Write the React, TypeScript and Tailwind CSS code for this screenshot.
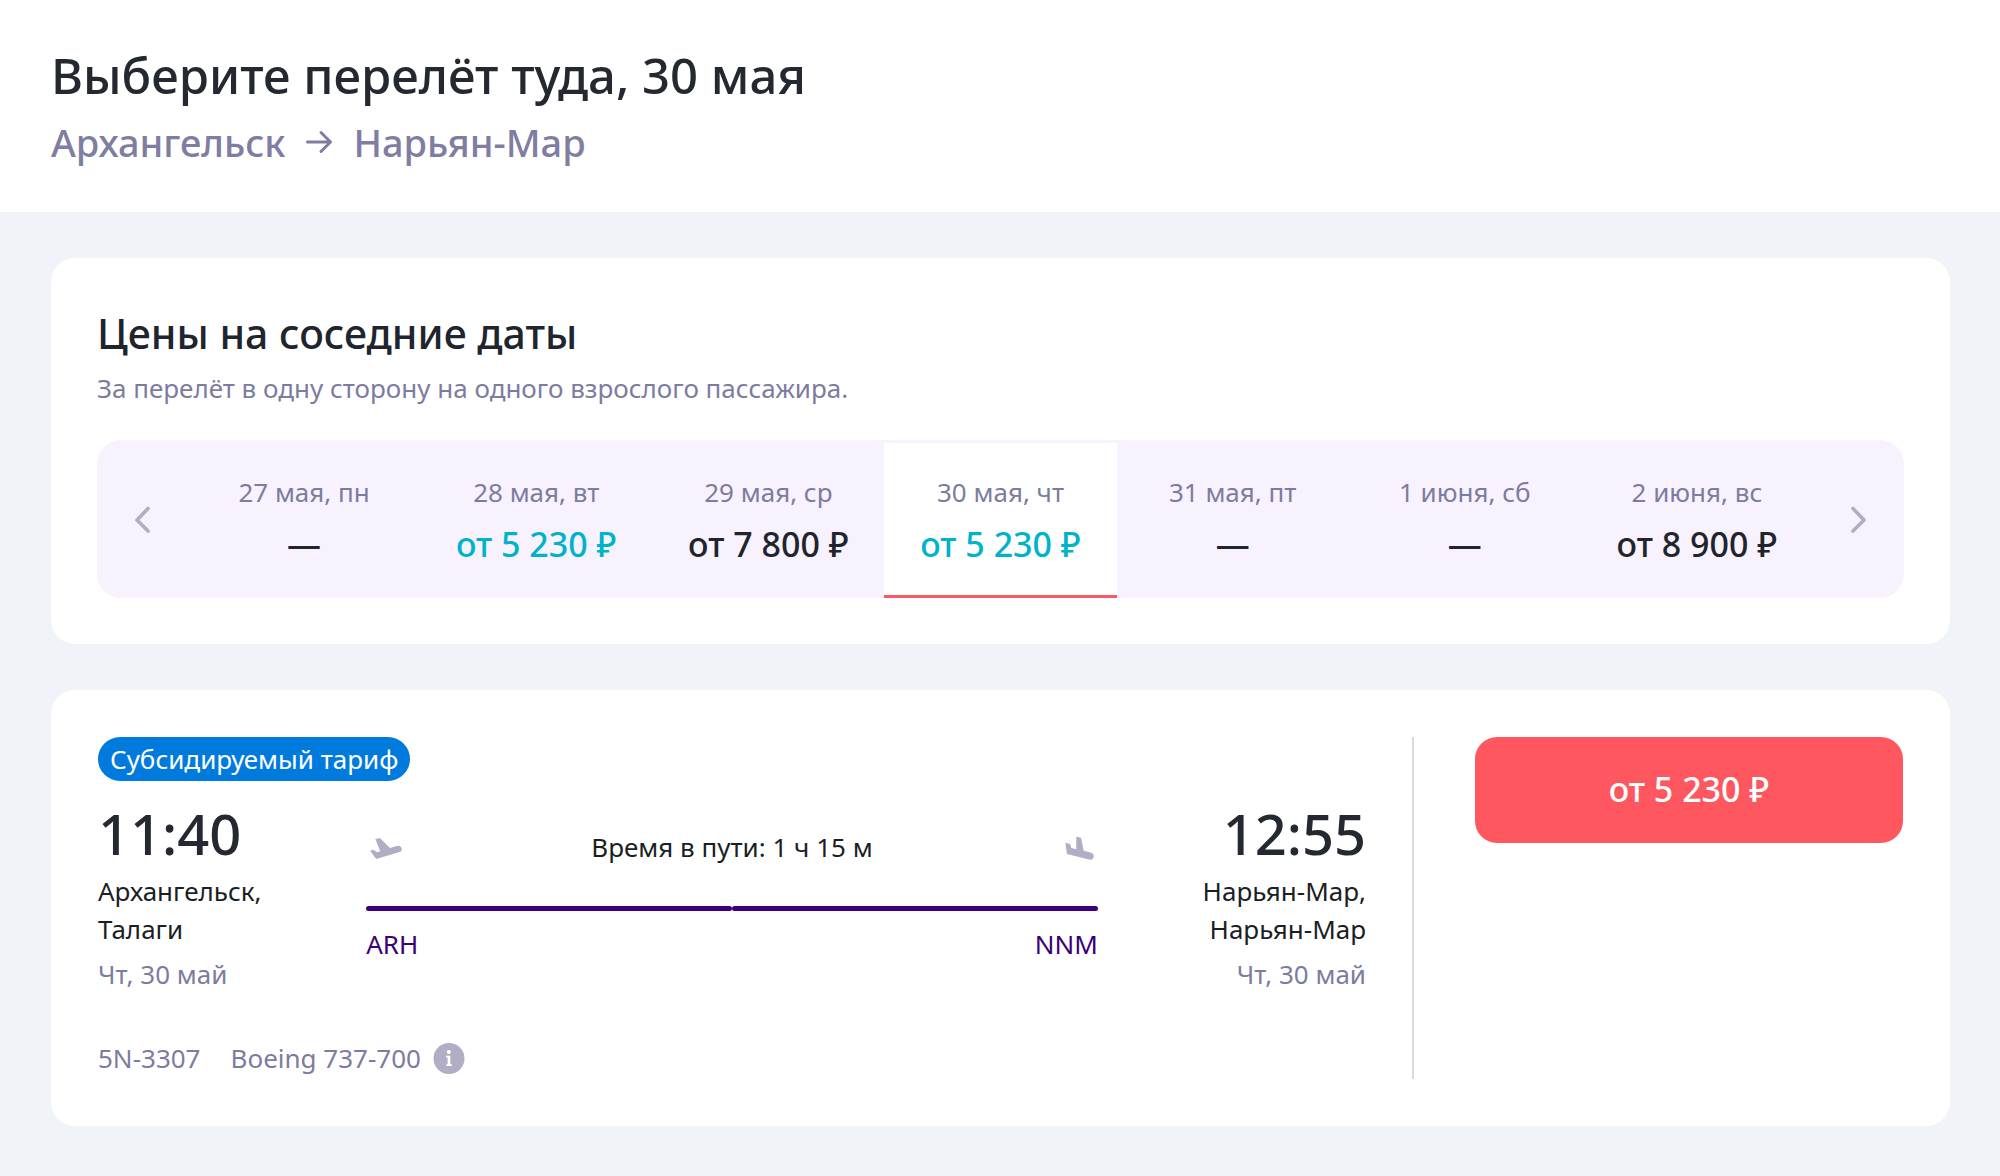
const prices = [
  { date: "27 мая, пн", price: null },
  { date: "28 мая, вт", price: "от 5 230 ₽", best: true },
  { date: "29 мая, ср", price: "от 7 800 ₽" },
  { date: "30 мая, чт", price: "от 5 230 ₽", best: true, selected: true },
  { date: "31 мая, пт", price: null },
  { date: "1 июня, сб", price: null },
  { date: "2 июня, вс", price: "от 8 900 ₽" },
];

const Chevron = ({ d }: { d: string }) => (
  <svg className="w-4 h-7" viewBox="0 0 16 28" fill="none" stroke="#b0adc4" strokeWidth="3.6" strokeLinecap="round" strokeLinejoin="round">
    <path d={d} />
  </svg>
);

const DateStrip = () => (
  <div className="flex mt-[33px] rounded-3xl bg-[#f7f2fe] overflow-hidden">
    <button aria-label="Предыдущие даты" className="w-[91px] shrink-0 flex items-center justify-center cursor-pointer">
      <Chevron d="M13 3.500 L2 15 L13 26" />
    </button>
    {prices.map((item) => (
      <button
        key={item.date}
        className={`flex-1 border-y-[3px] border-t-[#f7f2fe] pt-[31px] pb-7 cursor-pointer ${
          item.selected ? "bg-white border-b-[#ff575f]" : "border-b-transparent"
        }`}
      >
        <span className="block text-[26px] leading-[36px] text-[#7d7c9f]">{item.date}</span>
        <span
          className={`block mt-[11px] text-[34px] leading-[46px] font-medium ${item.best ? "text-[#00b3cb]" : "text-[#20242c]"}`}
        >
          {item.price ?? "—"}
        </span>
      </button>
    ))}
    <button aria-label="Следующие даты" className="w-[91px] shrink-0 flex items-center justify-center cursor-pointer">
      <Chevron d="M3 3.500 L14 15 L3 26" />
    </button>
  </div>
);

type PointProps = { time: string; city: string; airport: string; date: string; className?: string };

const Point = ({ time, city, airport, date, className = "" }: PointProps) => (
  <div className={className}>
    <p className="text-[56px] leading-[62px] font-medium text-[#242830]">{time}</p>
    <p className="mt-2 text-[26px] leading-[38px] text-[#1b1e25]">
      {city},
      <br />
      {airport}
    </p>
    <p className="mt-[7px] text-[26px] leading-[38px] text-[#7d7c9f]">{date}</p>
  </div>
);

const Flight = () => (
  <section className="mt-[46px] flex rounded-3xl bg-white p-[47px]">
    <div className="flex-1 pr-[46px] border-r-2 border-[#dad9e3]">
      <span className="inline-block align-top rounded-full bg-[#007bdd] px-3 text-[26px] leading-[44px] text-white">
        Субсидируемый тариф
      </span>
      <div className="mt-[21px] grid grid-cols-[11fr_30fr_11fr]">
        <Point time="11:40" city="Архангельск" airport="Талаги" date="Чт, 30 май" />
        <div className="pt-[26px] text-[26px] leading-[38px]">
          <div className="flex items-center justify-between px-1">
            {/* Takeoff */}
            <svg className="w-8 h-7" viewBox="0 0 32 28" fill="#b0adc4">
              <path d="M5.300 6 L10 5 L20 15 L27.500 12.800 C31.800 12 33.500 17.800 29.500 19.100 L6.300 26 L0 17.700 L3.500 16.700 L7 19.300 L10.300 18.300 Z" />
            </svg>
            <span className="text-[#1b1e25]">Время в пути: 1 ч 15 м</span>
            {/* Landing */}
            <svg className="w-8 h-7" viewBox="0 0 32 28" fill="#b0adc4">
              <path d="M14.300 3.700 L19 4.700 L21.700 17.700 L29.400 19.800 C33.500 21.500 31.800 27.300 28 26.800 L5 21 L3.300 9.700 L8 11 L9.300 15 L14.300 16.300 Z" />
            </svg>
          </div>
          <div className="mt-10 flex">
            <div className="h-[5px] flex-1 rounded-full bg-[#3b0076]" />
            <div className="h-[5px] flex-1 rounded-full bg-[#3b0076]" />
          </div>
          <div className="mt-3.5 flex justify-between text-[#3b0076]">
            <span>ARH</span>
            <span>NNM</span>
          </div>
        </div>
        <Point time="12:55" city="Нарьян-Мар" airport="Нарьян-Мар" date="Чт, 30 май" className="text-right" />
      </div>
      <div className="mt-11 flex items-center text-[26px] leading-[42px] text-[#7d7c9f]">
        <span>5N-3307</span>
        <span className="ml-[30px]">Boeing 737-700</span>
        <button aria-label="О самолёте" className="ml-3 cursor-pointer">
          <svg className="w-8 h-8" viewBox="0 0 32 32">
            <circle cx="16" cy="16.500" r="15.500" fill="#b0adc4" />
            <circle cx="15.800" cy="10" r="2" fill="#fff" />
            <path d="M13 13.800 H17.300 V22.300 H18.800 V24 H13.300 V22.300 H14.600 V15.500 H13 Z" fill="#fff" />
          </svg>
        </button>
      </div>
    </div>
    <div className="ml-[61px] w-[428px]">
      <button className="w-full rounded-[22px] bg-[#ff575f] pt-[29px] pb-[31px] text-[34px] leading-[46px] font-medium text-white cursor-pointer">
        от 5 230 ₽
      </button>
    </div>
  </section>
);

const App = () => {
  return (
    <div className="min-h-screen bg-[#f0f3f8] font-['Noto_Sans',sans-serif]">
      <header className="bg-white px-[51px] pt-[46px] pb-11">
        <h1 className="text-[49px] leading-[58px] font-medium text-[#242830]">Выберите перелёт туда, 30 мая</h1>
        <div className="mt-3 flex items-center gap-5 text-[38px] leading-[52px] font-medium text-[#7f7da1]">
          <span>Архангельск</span>
          <svg className="w-7 h-6" viewBox="0 0 28 24" fill="none" stroke="#7f7da1" strokeWidth="3" strokeLinecap="round" strokeLinejoin="round">
            <path d="M2.500 12 H25 M16 2.500 L25.500 12 L16 21.500" />
          </svg>
          <span>Нарьян-Мар</span>
        </div>
      </header>
      <main className="pl-[51px] pr-[50px] py-[46px]">
        <section className="rounded-3xl bg-white px-[46px] pt-12 pb-[46px]">
          <h2 className="text-[41px] leading-[54px] font-medium text-[#20242c]">Цены на соседние даты</h2>
          <p className="mt-[9px] text-[26px] leading-[38px] text-[#7d7c9f]">
            За перелёт в одну сторону на одного взрослого пассажира.
          </p>
          <DateStrip />
        </section>
        <Flight />
      </main>
    </div>
  );
};

export default App;
